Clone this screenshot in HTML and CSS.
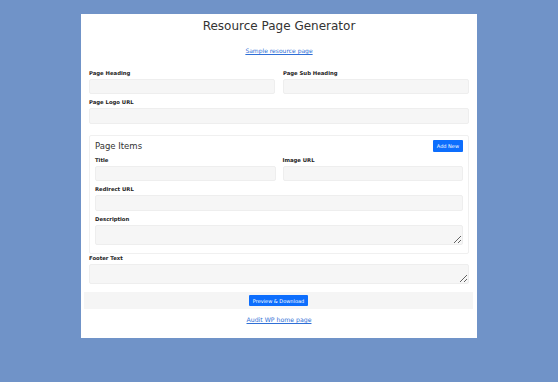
FILE: index.html
```html
<!DOCTYPE html>
<html lang="en">
<head>
    <meta charset="UTF-8">
    <meta name="viewport" content="width=device-width, initial-scale=1.0">
    <title>Resource Page Generator</title>
    <link rel="stylesheet" href="styles.css">
</head>
<body>

<div class="container">
    <h1 class="title">Resource Page Generator</h1>
    <p class="top-link"><a href="#">Sample resource page</a></p>

    <form id="pageForm">
        <div class="row">
            <div class="field">
                <label for="heading">Page Heading</label>
                <input type="text" id="heading">
            </div>
            <div class="field">
                <label for="subHeading">Page Sub Heading</label>
                <input type="text" id="subHeading">
            </div>
        </div>

        <div class="field">
            <label for="logo">Page Logo URL</label>
            <input type="text" id="logo" class="tall">
        </div>

        <div class="items">
            <div class="items-head">
                <h3>Page Items</h3>
                <button type="button" class="btn">Add New</button>
            </div>
            <div class="row row-items">
                <div class="field">
                    <label for="itemTitle">Title</label>
                    <input type="text" id="itemTitle">
                </div>
                <div class="field">
                    <label for="itemImage">Image URL</label>
                    <input type="text" id="itemImage">
                </div>
            </div>
            <div class="field">
                <label for="itemUrl">Redirect URL</label>
                <input type="text" id="itemUrl" class="tall">
            </div>
            <div class="field">
                <label for="itemDesc">Description</label>
                <textarea id="itemDesc"></textarea>
            </div>
        </div>

        <div class="field footer-field">
            <label for="footer">Footer Text</label>
            <textarea id="footer"></textarea>
        </div>

        <div class="actions">
            <button type="submit" class="btn">Preview &amp; Download</button>
        </div>
    </form>

    <p class="bottom-link"><a href="#">Audit WP home page</a></p>
</div>

</body>
</html>
```

FILE: styles.css
```css
body { margin: 0; background-color: #7093c8; font-family: "DejaVu Sans", sans-serif; color: #222; }
.container { width: 380px; margin: 14px auto 0; padding: 4px 8px 13px; background-color: #fff; }
.title { margin: 0; font-size: 12px; line-height: 17px; font-weight: normal; text-align: center; color: #333; }
.top-link { margin: 11px 0 0; font-size: 6px; line-height: 10px; text-align: center; }
.bottom-link { margin: 6px 0 0; font-size: 6.2px; line-height: 10px; text-align: center; }
a { color: #2f6fd6; }
form { margin-top: 13px; }
.row { display: grid; grid-template-columns: 1fr 1fr; gap: 8px; }
.row-items { gap: 7px; }
.field { display: flex; flex-direction: column; }
.field + .field, .row + .field { margin-top: 4px; }
label { font-size: 5.3px; line-height: 8px; font-weight: bold; margin-bottom: 2px; color: #222; }
input, textarea { box-sizing: border-box; height: 15px; width: 100%; margin: 0; background-color: #f6f6f6; border: 1px solid #eeeeee; border-radius: 2px; font-size: 6px; }
input.tall { height: 16px; }
textarea { height: 20px; resize: vertical; }
.items { margin-top: 11px; padding: 4px 5px 8px; border: 1px solid #f0f0f0; border-radius: 2px; }
.items-head { display: flex; justify-content: space-between; align-items: center; height: 12px; margin-bottom: 4px; }
.items-head h3 { margin: 0; font-size: 8.5px; font-weight: normal; color: #333; }
.row > .field, .items .row > .field { margin-top: 0; }
.footer-field { margin-top: 0; }
.btn { height: 12px; padding: 0 4px; border: none; border-radius: 1px; background-color: #0d6efd; color: #fff; font-family: "DejaVu Sans", sans-serif; font-size: 5px; cursor: pointer; }
.actions { display: flex; justify-content: center; align-items: center; height: 17px; margin: 8px -4px 0 -5px; background-color: #f5f5f5; }
.actions .btn { height: 11px; }
```
